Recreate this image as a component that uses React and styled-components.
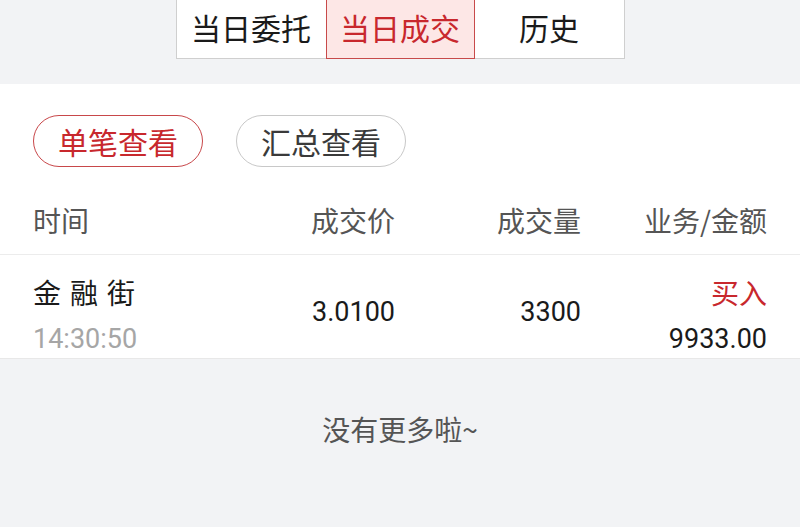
import styled, { createGlobalStyle } from "styled-components";

const GlobalStyle = createGlobalStyle`
  html, body {
    margin: 0;
    padding: 0;
    background: #f2f3f5;
  }
  body {
    font-family: "Noto Sans CJK SC", "Noto Sans", sans-serif;
  }
`;

const Page = styled.div`
  width: 800px;
  height: 527px;
  background: #f2f3f5;
  overflow: hidden;
`;

const TabBar = styled.div`
  display: flex;
  justify-content: center;
`;

const TabGroup = styled.div`
  display: flex;
  background: #fff;
  border: 1px solid #cfcfcf;
  border-top: none;
`;

const Tab = styled.div`
  width: 149px;
  display: flex;
  align-items: center;
  justify-content: center;
  box-sizing: border-box;
  padding-bottom: 5px;
  font-size: 30px;
  color: ${(p) => (p.active ? "#c8282d" : "#1a1a1a")};
  background: ${(p) => (p.active ? "#fde7e6" : "#fff")};
  border: ${(p) => (p.active ? "1px solid #c84a4a" : "none")};
  border-top: none;
  margin-bottom: ${(p) => (p.active ? "-1px" : "0")};
  height: ${(p) => (p.active ? "59px" : "58px")};
`;

const Panel = styled.div`
  margin-top: 25px;
  background: #fff;
  border-bottom: 1px solid #e8e8e8;
`;

const PillRow = styled.div`
  display: flex;
  gap: 33px;
  padding: 31px 33px 0;
`;

const Pill = styled.div`
  width: 170px;
  height: 52px;
  box-sizing: border-box;
  border-radius: 26px;
  display: flex;
  align-items: center;
  justify-content: center;
  font-size: 30px;
  color: ${(p) => (p.active ? "#c8282d" : "#3a3a3a")};
  border: 1px solid ${(p) => (p.active ? "#c8474a" : "#c8c8c8")};
`;

const Grid = styled.div`
  display: grid;
  grid-template-columns: 176px 186px 186px 186px;
  padding: 0 33px;
`;

const HeaderRow = styled(Grid)`
  height: 88px;
  padding-top: 18px;
  box-sizing: border-box;
  align-items: center;
  border-bottom: 1px solid #ececec;
`;

const HeadCell = styled.div`
  font-size: 28px;
  color: #555;
  text-align: ${(p) => (p.left ? "left" : "right")};
`;

const DataRow = styled(Grid)`
  height: 103px;
  box-sizing: border-box;
  padding-top: 17px;
  align-items: start;
`;

const Cell = styled.div`
  display: flex;
  flex-direction: column;
  align-items: ${(p) => (p.left ? "flex-start" : "flex-end")};
  padding-top: ${(p) => p.top || 0}px;
`;

const Name = styled.div`
  font-size: 28px;
  color: #1a1a1a;
  letter-spacing: 9px;
  line-height: 40px;
`;

const Num = styled.div`
  font-family: Roboto, "Liberation Sans", sans-serif;
  font-size: 27px;
  color: ${(p) => p.color || "#1a1a1a"};
  line-height: 38px;
  margin-top: ${(p) => p.top || 0}px;
`;

const Side = styled.div`
  font-size: 28px;
  color: #c8282d;
  line-height: 40px;
`;

const Footer = styled.div`
  text-align: center;
  padding-top: 50px;
  font-size: 28px;
  color: #555;
`;

export default function App() {
  return (
    <Page>
      <GlobalStyle />
      <TabBar>
        <TabGroup>
          <Tab>当日委托</Tab>
          <Tab active>当日成交</Tab>
          <Tab>历史</Tab>
        </TabGroup>
      </TabBar>
      <Panel>
        <PillRow>
          <Pill active>单笔查看</Pill>
          <Pill>汇总查看</Pill>
        </PillRow>
        <HeaderRow>
          <HeadCell left>时间</HeadCell>
          <HeadCell>成交价</HeadCell>
          <HeadCell>成交量</HeadCell>
          <HeadCell>业务/金额</HeadCell>
        </HeaderRow>
        <DataRow>
          <Cell left>
            <Name>金融街</Name>
            <Num color="#a6a6a6" top={8}>14:30:50</Num>
          </Cell>
          <Cell top={21}>
            <Num>3.0100</Num>
          </Cell>
          <Cell top={21}>
            <Num>3300</Num>
          </Cell>
          <Cell>
            <Side>买入</Side>
            <Num top={8}>9933.00</Num>
          </Cell>
        </DataRow>
      </Panel>
      <Footer>没有更多啦~</Footer>
    </Page>
  );
}
